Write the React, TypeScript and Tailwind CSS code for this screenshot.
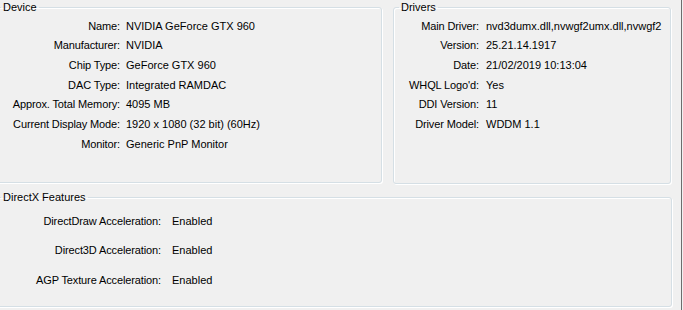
const device: [string, string][] = [
  ["Name:", "NVIDIA GeForce GTX 960"],
  ["Manufacturer:", "NVIDIA"],
  ["Chip Type:", "GeForce GTX 960"],
  ["DAC Type:", "Integrated RAMDAC"],
  ["Approx. Total Memory:", "4095 MB"],
  ["Current Display Mode:", "1920 x 1080 (32 bit) (60Hz)"],
  ["Monitor:", "Generic PnP Monitor"],
];

const drivers: [string, string][] = [
  ["Main Driver:", "nvd3dumx.dll,nvwgf2umx.dll,nvwgf2"],
  ["Version:", "25.21.14.1917"],
  ["Date:", "21/02/2019 10:13:04"],
  ["WHQL Logo'd:", "Yes"],
  ["DDI Version:", "11"],
  ["Driver Model:", "WDDM 1.1"],
];

const features: [string, string][] = [
  ["DirectDraw Acceleration:", "Enabled"],
  ["Direct3D Acceleration:", "Enabled"],
  ["AGP Texture Acceleration:", "Enabled"],
];

// group box in the old Windows style: grey-blue line with a white highlight
const box =
  "m-0 p-0 rounded-[3px] border border-[#d5dfe5] shadow-[inset_1px_1px_0_#ffffff,1px_1px_0_#ffffff]";

function Legend({ children }: { children: string }) {
  return <legend className="ml-[5px] px-[2px] leading-[14px]">{children}</legend>;
}

function Rows({
  rows,
  labelWidth,
  gap,
  rowHeight,
}: {
  rows: [string, string][];
  labelWidth: string;
  gap: string;
  rowHeight: string;
}) {
  return (
    <div className={`grid ${rowHeight}`} style={{ gridTemplateColumns: `${labelWidth} 1fr` }}>
      {rows.map(([label, value]) => (
        <div key={label} className="contents">
          <div className="flex items-center justify-end whitespace-nowrap tracking-[-0.12px]">{label}</div>
          <div className={`flex items-center whitespace-nowrap overflow-hidden ${gap}`}>{value}</div>
        </div>
      ))}
    </div>
  );
}

export default function App() {
  return (
    <div
      className="relative w-[683px] h-[310px] overflow-hidden bg-[#f0f0f0] text-[11px] text-black"
      style={{ fontFamily: '"Liberation Sans", Arial, sans-serif' }}
    >
      <div className="flex flex-col">
        <div className="flex">
          {/* Device */}
          <fieldset className={`${box} ml-[-5px] w-[387px] h-[183px]`}>
            <Legend>Device</Legend>
            <div className="pt-[2px]">
              <Rows rows={device} labelWidth="124px" gap="pl-[6px]" rowHeight="auto-rows-[19.67px]" />
            </div>
          </fieldset>

          {/* Drivers */}
          <fieldset className={`${box} ml-[11px] w-[278px] h-[184px]`}>
            <Legend>Drivers</Legend>
            <div className="pt-[2px]">
              <Rows rows={drivers} labelWidth="85px" gap="pl-[7px]" rowHeight="auto-rows-[19.67px]" />
            </div>
          </fieldset>
        </div>

        {/* DirectX Features */}
        <fieldset className={`${box} ml-[-5px] mt-[6px] w-[677px] h-[117px]`}>
          <Legend>DirectX Features</Legend>
          <div className="pt-[2px]">
            <Rows rows={features} labelWidth="165px" gap="pl-[11px]" rowHeight="auto-rows-[29.5px]" />
          </div>
        </fieldset>
      </div>

      {/* window edge on the right */}
      <div className="absolute top-0 right-[1px] w-[1px] h-full bg-[#6d6d6d]" />
    </div>
  );
}
